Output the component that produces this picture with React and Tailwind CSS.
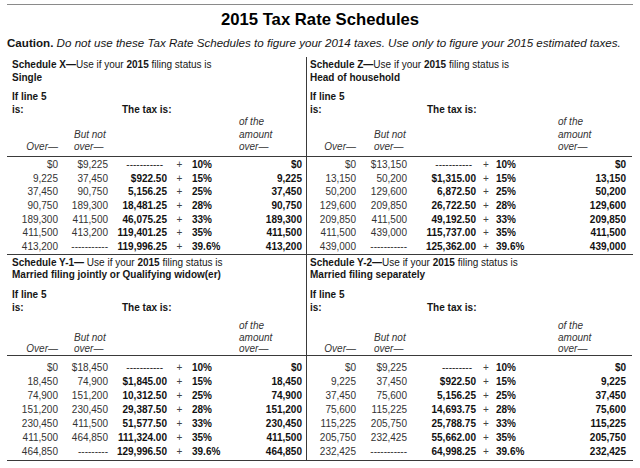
import React from "react";

const X = [
  ["$0", "$9,225", "-----------", "10%", "$0"],
  ["9,225", "37,450", "$922.50", "15%", "9,225"],
  ["37,450", "90,750", "5,156.25", "25%", "37,450"],
  ["90,750", "189,300", "18,481.25", "28%", "90,750"],
  ["189,300", "411,500", "46,075.25", "33%", "189,300"],
  ["411,500", "413,200", "119,401.25", "35%", "411,500"],
  ["413,200", "-----------", "119,996.25", "39.6%", "413,200"],
];
const Z = [
  ["$0", "$13,150", "-----------", "10%", "$0"],
  ["13,150", "50,200", "$1,315.00", "15%", "13,150"],
  ["50,200", "129,600", "6,872.50", "25%", "50,200"],
  ["129,600", "209,850", "26,722.50", "28%", "129,600"],
  ["209,850", "411,500", "49,192.50", "33%", "209,850"],
  ["411,500", "439,000", "115,737.00", "35%", "411,500"],
  ["439,000", "-----------", "125,362.00", "39.6%", "439,000"],
];
const Y1 = [
  ["$0", "$18,450", "-----------", "10%", "$0"],
  ["18,450", "74,900", "$1,845.00", "15%", "18,450"],
  ["74,900", "151,200", "10,312.50", "25%", "74,900"],
  ["151,200", "230,450", "29,387.50", "28%", "151,200"],
  ["230,450", "411,500", "51,577.50", "33%", "230,450"],
  ["411,500", "464,850", "111,324.00", "35%", "411,500"],
  ["464,850", "---------", "129,996.50", "39.6%", "464,850"],
];
const Y2 = [
  ["$0", "$9,225", "---------", "10%", "$0"],
  ["9,225", "37,450", "$922.50", "15%", "9,225"],
  ["37,450", "75,600", "5,156.25", "25%", "37,450"],
  ["75,600", "115,225", "14,693.75", "28%", "75,600"],
  ["115,225", "205,750", "25,788.75", "33%", "115,225"],
  ["205,750", "232,425", "55,662.00", "35%", "205,750"],
  ["232,425", "-----------", "64,998.25", "39.6%", "232,425"],
];

function Section({ side, bottom, title, status, rows }) {
  const L = side === "left";
  const c = L
    ? ["w-[51px]", "w-[50px]", "w-[59px]", "w-[25px]", "w-[47px]", "w-[63px]"]
    : ["w-[49px]", "w-[51px]", "w-[69px]", "w-[20px]", "w-[62px]", "w-[68px]"];
  const rowH = bottom ? "h-[14px] leading-[14px]" : "h-[13.7px] leading-[13.7px]";
  return (
    <div className={L ? "w-[300px] border-r border-[#3a3a3a]" : "w-[325px]"}>
      <div className={L ? "pl-[5px]" : "pl-[3px]"}>
        <div className={bottom ? "pt-[2px] leading-[12px] text-[10px]" : "pt-[1px] leading-[13px] text-[10px]"}>
          <div className="whitespace-nowrap">
            <span className="font-bold">{title}</span>
            {bottom && L ? " " : ""}Use if your <span className="font-bold">2015</span> filing status is
          </div>
          <div className="font-bold whitespace-nowrap">{status}</div>
        </div>
        <div className={bottom ? "mt-[7.5px] text-[10px] font-bold leading-[13px]" : "mt-[6px] text-[10px] font-bold leading-[13px]"}>
          <div>If line 5</div>
          <div className="flex">
            <div className={L ? "w-[110px]" : "w-[117px]"}>is:</div>
            <div>The tax is:</div>
          </div>
        </div>
      </div>
      <div
        className={
          "flex items-end italic text-[10px] text-[#333] border-b border-[#3a3a3a] " +
          (bottom ? "mt-[6px] leading-[11.5px] pb-[0.5px]" : "leading-[12.5px] pb-[2px]")
        }
      >
        <div className={c[0] + " text-right"}>Over—</div>
        <div className={c[1] + (L ? " pl-[16px]" : " pl-[18px]")}>
          <div>But not</div>
          <div>over—</div>
        </div>
        <div className={c[2]} />
        <div className={c[3]} />
        <div className={c[4]} />
        <div className={c[5]}>
          <div>of the</div>
          <div>amount</div>
          <div>over—</div>
        </div>
      </div>
      <div className={bottom ? "pt-[5px] pb-[1px]" : "pt-[1.5px]"}>
        {rows.map((r, i) => {
          const dash = r[2].startsWith("-");
          return (
            <div key={i} className={"flex text-[10px] whitespace-nowrap " + rowH}>
              <div className={c[0] + " text-right text-[#333]"}>{r[0]}</div>
              <div className={c[1] + " text-right text-[#333]"}>{r[1]}</div>
              <div className={c[2] + " text-right " + (dash ? "text-[#222] pr-[4px]" : "font-bold text-[#111]")}>{r[2]}</div>
              <div className={c[3] + " text-center text-[#444]"}>+</div>
              <div className={c[4] + " font-bold text-[#111]"}>{r[3]}</div>
              <div className={c[5] + " text-right font-bold text-[#111]"}>{r[4]}</div>
            </div>
          );
        })}
      </div>
    </div>
  );
}

export default function App() {
  return (
    <div className="w-[640px] h-[468px] bg-white overflow-hidden font-['Liberation_Sans',Arial,sans-serif] text-[#161616]">
      <div className="pt-[4px] px-[7px]">
        <div className="h-px bg-[#8a8a8a]" />
        <div className="mt-[5px] text-center text-[16.7px] font-bold leading-[20px] text-black">
          2015 Tax Rate Schedules
        </div>
        <div className="mt-[6px] text-[11.6px] leading-[14px] whitespace-nowrap">
          <span className="font-bold">Caution.</span>{" "}
          <span className="italic">
            Do not use these Tax Rate Schedules to figure your 2014 taxes. Use only to figure your 2015 estimated taxes.
          </span>
        </div>
        <div className="mt-[7px]">
          <div className="flex border-b border-[#3a3a3a]">
            <Section side="left" title="Schedule X—" status="Single" rows={X} />
            <Section side="right" title="Schedule Z—" status="Head of household" rows={Z} />
          </div>
          <div className="flex border-b border-[#3a3a3a]">
            <Section side="left" bottom title="Schedule Y-1—" status="Married filing jointly or Qualifying widow(er)" rows={Y1} />
            <Section side="right" bottom title="Schedule Y-2—" status="Married filing separately" rows={Y2} />
          </div>
        </div>
      </div>
    </div>
  );
}
